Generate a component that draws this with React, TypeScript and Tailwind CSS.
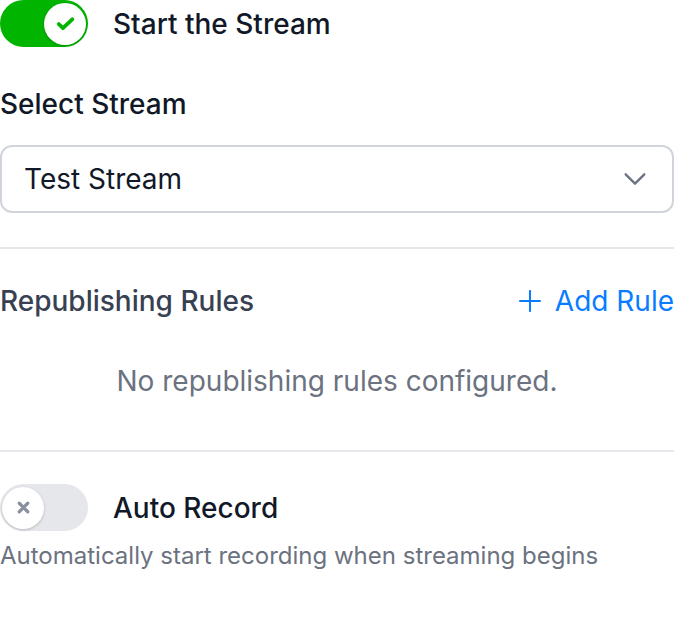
import React, { useState } from 'react';

const Toggle: React.FC<{ on: boolean; onChange: () => void }> = ({ on, onChange }) => (
  <button
    type="button"
    onClick={onChange}
    className={`relative flex h-[47px] w-[88px] shrink-0 items-center rounded-full px-[2px] transition-colors ${on ? 'justify-end bg-[#00b400]' : 'justify-start bg-[#e5e7eb]'}`}
  >
    <span className="flex h-[42px] w-[42px] items-center justify-center rounded-full bg-white shadow-[0_1px_3px_rgba(0,0,0,0.2)]">
      {on ? (
        <svg width="25" height="25" viewBox="0 0 24 24" fill="none" stroke="#00b400" strokeWidth="3.6" strokeLinecap="round" strokeLinejoin="round">
          <path d="M5.5 12.5l4 4L18.5 8" />
        </svg>
      ) : (
        <svg width="17" height="17" viewBox="0 0 24 24" fill="none" stroke="#8b90a0" strokeWidth="4.5" strokeLinecap="round">
          <path d="M6 6l12 12M18 6L6 18" />
        </svg>
      )}
    </span>
  </button>
);

const App: React.FC = () => {
  const [streaming, setStreaming] = useState(true);
  const [autoRecord, setAutoRecord] = useState(false);

  return (
    <div className="w-[674px] bg-white font-['Inter',sans-serif] text-[#111827]">
      <div className="flex items-center gap-[25px]">
        <Toggle on={streaming} onChange={() => setStreaming(!streaming)} />
        <span className="text-[28px] font-medium leading-[34px]">Start the Stream</span>
      </div>

      <div className="mt-[40px] text-[28px] font-medium leading-[34px]">Select Stream</div>
      <div className="mt-[24px] flex h-[68px] items-center justify-between rounded-[12px] border-2 border-[#d1d5db] pl-[22px] pr-[23px]">
        <span className="text-[28px] leading-[34px]">Test Stream</span>
        <svg width="28" height="28" viewBox="0 0 24 24" fill="none" stroke="#6b7280" strokeWidth="2" strokeLinecap="round" strokeLinejoin="round">
          <path d="M4 8l8 8 8-8" />
        </svg>
      </div>

      <div className="mt-[34px] border-t-2 border-[#e5e7eb]" />

      <div className="mt-[35px] flex items-center justify-between">
        <span className="text-[28px] font-medium leading-[34px] text-[#374151]">Republishing Rules</span>
        <button type="button" className="flex items-center gap-[14px] text-[28px] leading-[34px] text-[#0a7cff]">
          <svg width="22" height="22" viewBox="0 0 24 24" fill="none" stroke="#0a7cff" strokeWidth="2.2" strokeLinecap="round">
            <path d="M12 1v22M1 12h22" />
          </svg>
          Add Rule
        </button>
      </div>

      <p className="mt-[46px] text-center text-[28px] leading-[34px] text-[#6b7280]">No republishing rules configured.</p>

      <div className="mt-[52px] border-t-2 border-[#e5e7eb]" />

      <div className="mt-[32px] flex items-center gap-[25px]">
        <Toggle on={autoRecord} onChange={() => setAutoRecord(!autoRecord)} />
        <span className="text-[28px] font-medium leading-[34px]">Auto Record</span>
      </div>
      <p className="mt-[10px] text-[24px] leading-[30px] text-[#6b7280]">Automatically start recording when streaming begins</p>
    </div>
  );
};

export default App;
